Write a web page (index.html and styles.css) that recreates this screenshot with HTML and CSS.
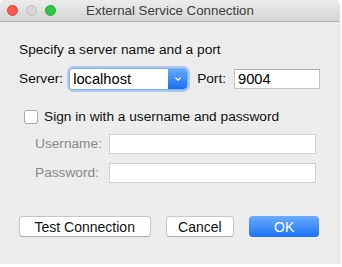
FILE: index.html
```html
<!DOCTYPE html>
<html lang="en">
<head>
    <meta charset="UTF-8">
    <title>External Service Connection</title>
    <link rel="stylesheet" href="styles.css">
</head>
<body>
    <div class="window">
        <div class="titlebar">
            <div class="lights">
                <span class="light close"></span>
                <span class="light min"></span>
                <span class="light zoom"></span>
            </div>
            <div class="title">External Service Connection</div>
        </div>

        <div class="content">
            <div class="heading">Specify a server name and a port</div>

            <div class="server-row">
                <label class="label">Server:</label>
                <div class="combo">
                    <input class="combo-field" type="text" value="localhost">
                    <div class="combo-arrow">
                        <svg width="8" height="6" viewBox="0 0 8 6">
                            <path d="M1.5 1.8 L4 4.2 L6.5 1.8" fill="none" stroke="#fff" stroke-width="1.3"/>
                        </svg>
                    </div>
                </div>
                <label class="label port-label">Port:</label>
                <input class="field port" type="text" value="9004">
            </div>

            <div class="check-row">
                <span class="checkbox"></span>
                <span>Sign in with a username and password</span>
            </div>

            <div class="cred-row">
                <label class="label muted">Username:</label>
                <input class="field cred" type="text">
            </div>
            <div class="cred-row">
                <label class="label muted">Password:</label>
                <input class="field cred" type="password">
            </div>

            <div class="buttons">
                <button class="btn test">Test Connection</button>
                <button class="btn cancel">Cancel</button>
                <button class="btn ok">OK</button>
            </div>
        </div>
    </div>
</body>
</html>
```

FILE: styles.css
```css
body {
    margin: 0;
    font-family: "Liberation Sans", Arial, sans-serif;
    font-size: 13.7px;
    color: #111;
    background-color: #fff;
}
.window {
    width: 339px;
    height: 264px;
    background-color: #ececec;
    border-radius: 5px 5px 0 0;
    box-shadow: 0 1px 2px rgba(0, 0, 0, 0.45);
    overflow: hidden;
}
.titlebar {
    position: relative;
    height: 21px;
    background: linear-gradient(#ebebeb, #d5d5d5);
    border-bottom: 1px solid #b3b3b3;
    display: flex;
    align-items: center;
    justify-content: center;
}
.lights {
    position: absolute;
    left: 7px;
    top: 5px;
    display: flex;
    gap: 8px;
}
.light {
    width: 11px;
    height: 11px;
    border-radius: 50%;
    box-sizing: border-box;
}
.light.close {
    background-color: #fc5753;
    border: 1px solid #df3d38;
}
.light.min {
    background-color: #d6d6d6;
    border: 1px solid #bdbdbd;
}
.light.zoom {
    background-color: #33c748;
    border: 1px solid #24a834;
}
.title {
    color: #404040;
    font-size: 13.3px;
    padding-left: 1px;
}

.content {
    padding: 20px 20px 0 19px;
}
.heading {
    line-height: 16px;
}
.server-row {
    display: flex;
    align-items: center;
    margin-top: 10px;
    height: 22px;
}
.label {
    line-height: 16px;
}
.combo {
    display: flex;
    margin-left: 7px;
    width: 117px;
    height: 20px;
    border-radius: 4px;
    box-shadow: 0 0 0 1px #7fb0f3, 0 0 0 3px rgba(120, 170, 240, 0.55);
}
.combo-field {
    flex: 1;
    min-width: 0;
    border: none;
    outline: none;
    padding: 0 3px;
    font: inherit;
    font-size: 14.7px;
    color: #000;
    background-color: #fff;
    border-radius: 3px 0 0 3px;
}
.combo-arrow {
    width: 19px;
    display: flex;
    align-items: center;
    justify-content: center;
    background: linear-gradient(#62a8fb, #1b70f3);
    border-radius: 0 4px 4px 0;
}
.port-label {
    margin-left: 10px;
}
.field {
    height: 20px;
    box-sizing: border-box;
    border: 1px solid #c4c4c4;
    border-top-color: #aeaeae;
    background-color: #fff;
    font: inherit;
    font-size: 14.7px;
    color: #000;
    padding: 0 3px;
    outline: none;
}
.port {
    width: 86px;
    margin-left: 8px;
}
.check-row {
    display: flex;
    align-items: center;
    gap: 6px;
    margin-top: 19px;
    margin-left: 5px;
    line-height: 16px;
}
.checkbox {
    width: 14px;
    height: 14px;
    box-sizing: border-box;
    background-color: #fff;
    border: 1px solid #a9a9a9;
    border-radius: 3px;
}
.cred-row {
    display: flex;
    align-items: center;
    margin-top: 9px;
    margin-left: 16px;
}
.muted {
    color: #8a8a8a;
    width: 74px;
}
.cred {
    width: 207px;
    height: 20px;
    border-color: #d0d0d0;
}
.buttons {
    display: flex;
    margin-top: 33px;
}
.btn {
    height: 21px;
    box-sizing: border-box;
    font: inherit;
    font-size: 14px;
    color: #111;
    background-color: #fff;
    border: 1px solid #c6c6c6;
    border-bottom-color: #aaa;
    border-radius: 4px;
    padding: 0;
}
.test {
    width: 132px;
}
.cancel {
    width: 69px;
    margin-left: 15px;
}
.ok {
    width: 70px;
    margin-left: 15px;
    color: #fff;
    border: none;
    background: linear-gradient(#6aadfb, #1b72f4);
}
```
